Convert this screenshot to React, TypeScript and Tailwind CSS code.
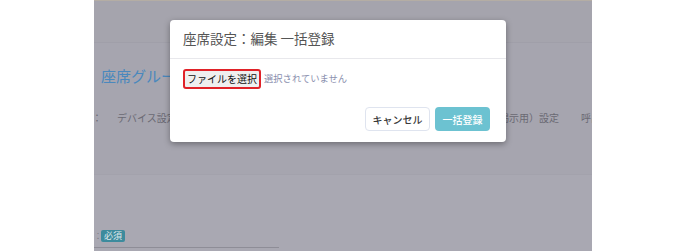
export default function App() {
  const jp = { fontFamily: '"Noto Sans CJK JP", "Noto Sans", sans-serif' };

  return (
    <div className="flex h-[251px] w-[688px] overflow-hidden bg-white" style={jp}>
      <div className="w-[94px] shrink-0 bg-white" />

      <div className="relative flex h-full w-[498px] shrink-0 flex-col overflow-hidden bg-[#a6a5af]">
        {/* page behind the overlay */}
        <div className="h-px bg-[#b4ada4]" />
        <div className="h-[42px] border-b border-[#a09fa9] bg-[#a5a4ad]" />

        <div className="flex h-[40px] items-end pl-[7px]">
          <span className="whitespace-nowrap text-[15px] leading-none text-[#4a88bd]">座席グループ</span>
        </div>

        <div className="mt-[30px] flex items-center whitespace-nowrap text-[10px] leading-none text-[#6a6973]">
          <span className="-ml-[2px] w-[25px] shrink-0">：</span>
          <span className="shrink-0">デバイス設定</span>
          <span className="flex-1" />
          <span className="shrink-0">掲示用）設定</span>
          <span className="ml-[22px] mr-[-9px] shrink-0">呼出</span>
        </div>

        <div className="mt-[44px] h-[8px] border-b border-[#a3a2ac]" />
        <div className="flex-1 bg-[#a9a8b2]" />

        <div className="flex h-[18px] items-center bg-[#a9a8b2]">
          <span className="w-[7px] text-[8px] leading-none text-[#7c7b85]">：</span>
          <span className="rounded-[2px] bg-[#3d8b9d] px-[3px] py-px text-[9px] leading-[10px] text-[#dfe8ec]">
            必須
          </span>
        </div>
        <div className="h-[6px] bg-[#a9a8b2]">
          <div className="mt-[2px] h-px w-[185px] bg-[#8e8d97]" />
        </div>

        {/* modal */}
        <div className="absolute left-[76px] top-[20px] flex h-[122px] w-[336px] flex-col rounded-[4px] bg-white shadow-[0_2px_6px_rgba(0,0,0,0.35)]">
          <div className="flex h-[39px] items-center border-b border-[#e8e8ec] px-[13px]">
            <span className="text-[13.5px] leading-none text-[#555]">座席設定：編集 一括登録</span>
          </div>
          <div className="flex items-center gap-[3px] px-[13px] pt-[10px]">
            <div className="rounded-[3px] border-2 border-[#e02228] bg-[#efefef] px-[2px] py-[2px] text-[10px] leading-[12px] text-[#111]">
              ファイルを選択
            </div>
            <span className="text-[9.3px] leading-none text-[#8a8fae]">選択されていません</span>
          </div>
          <div className="mt-auto flex justify-end gap-[5px] px-[16px] pb-[11px]">
            <button className="h-[24px] w-[65px] rounded-[4px] border border-[#dfe4ef] bg-white text-[10px] font-medium text-[#3a3a3a]">
              キャンセル
            </button>
            <button className="h-[24px] w-[55px] rounded-[4px] bg-[#6cc2d1] text-[10px] font-medium text-white">
              一括登録
            </button>
          </div>
        </div>
      </div>

      <div className="flex-1 bg-white" />
    </div>
  );
}
